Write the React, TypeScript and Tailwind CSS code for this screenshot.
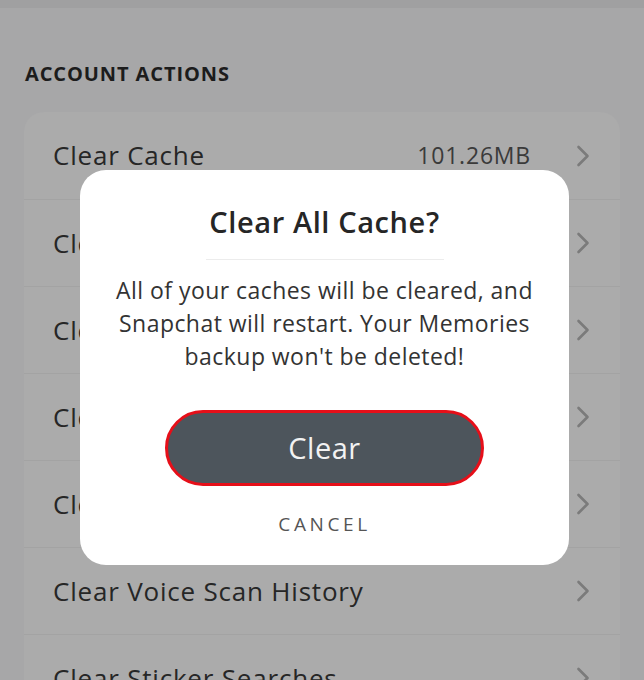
const rows = [
  { label: "Clear Cache", value: "101.26MB" },
  { label: "Clear Conversations" },
  { label: "Clear Search History" },
  { label: "Clear Top Locations" },
  { label: "Clear Scan History" },
  { label: "Clear Voice Scan History" },
  { label: "Clear Sticker Searches" },
];

function Chevron() {
  return (
    <svg width="14" height="24" viewBox="0 0 14 24" fill="none" stroke="#7b7b7b" strokeWidth="2.6" strokeLinecap="round" strokeLinejoin="round">
      <polyline points="2.5,3 11.5,12 2.5,21" />
    </svg>
  );
}

function ClearCacheDialog() {
  return (
    <div className="absolute left-[80px] top-[170px] flex h-[395px] w-[489px] flex-col items-center rounded-[26px] bg-white">
      <h2 className="mt-[34px] text-[29px] font-semibold leading-[36px] tracking-[0.6px] text-[#262626]">Clear All Cache?</h2>
      <div className="mt-[19px] h-px w-[238px] bg-[#ececec]" />
      <p className="mt-[14px] text-center text-[23px] leading-[33px] tracking-[0.45px] text-[#333]">
        All of your caches will be cleared, and
        <br />
        Snapchat will restart. Your Memories
        <br />
        backup won't be deleted!
      </p>
      <button className="mt-[37px] flex h-[76px] w-[319px] items-center justify-center rounded-full border-[3px] border-[#e60f19] bg-[#4d555c] text-[29px] tracking-[0.5px] text-[#f2f2f2]">
        Clear
      </button>
      <button className="mt-[24px] text-[19px] tracking-[3.6px] text-[#555]">CANCEL</button>
    </div>
  );
}

export default function App() {
  return (
    <div className="relative h-[680px] w-[644px] overflow-hidden bg-[#a7a7a8] font-['Open_Sans',sans-serif]">
      <div className="h-[8px] bg-[#a0a0a1]" />
      <div className="px-[25px] pt-[57px] text-[20px] font-bold leading-[18px] tracking-[0.9px] text-[#1c1c1c]">
        ACCOUNT ACTIONS
      </div>
      <div className="mx-[24px] mt-[29px] overflow-hidden rounded-[20px] bg-[#ababab]">
        {rows.map((row, i) => (
          <div
            key={row.label}
            className={`flex h-[87px] items-center pl-[29px] pr-[30px] ${i > 0 ? "border-t border-[#a3a3a3]" : ""}`}
          >
            <span className="flex-1 text-[26px] tracking-[0.8px] text-[#262626]">{row.label}</span>
            {row.value && <span className="mr-[45px] text-[23px] tracking-[0.8px] text-[#3a3a3a]">{row.value}</span>}
            <Chevron />
          </div>
        ))}
      </div>
      <ClearCacheDialog />
    </div>
  );
}
